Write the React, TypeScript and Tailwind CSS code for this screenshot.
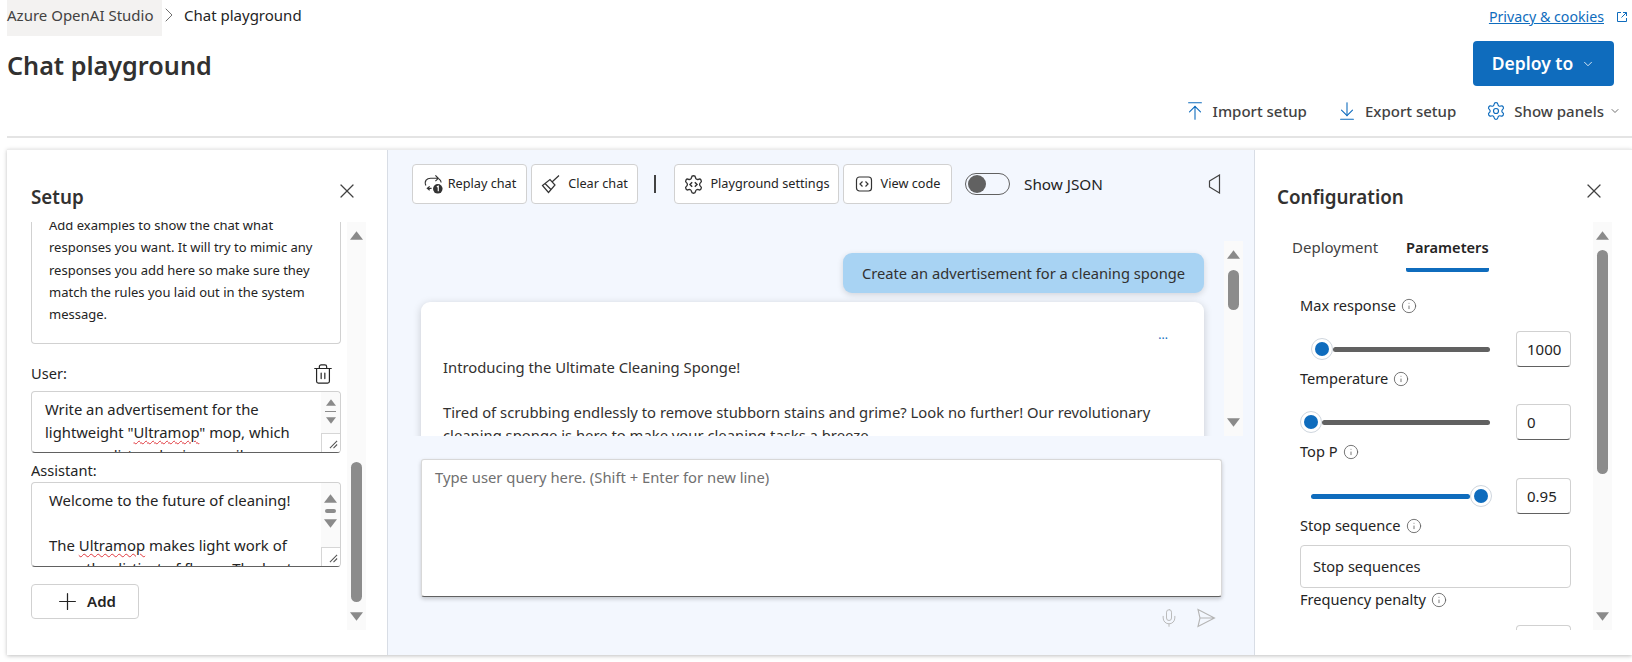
import {
  ChevronDown,
  ChevronRight,
  Info,
  Plus,
  Settings,
  Trash2,
  X,
  ArrowUpToLine,
  ArrowDownToLine,
  Mic,
} from "lucide-react";

function Up({ className }: { className: string }) {
  return (
    <svg viewBox="0 0 12 8" className={className}>
      <path d="M6 0 L12 8 H0 Z" fill="#8a8a8a" />
    </svg>
  );
}

function Down({ className }: { className: string }) {
  return (
    <svg viewBox="0 0 12 8" className={className}>
      <path d="M6 8 L12 0 H0 Z" fill="#8a8a8a" />
    </svg>
  );
}

function ScrollBar({ top, height }: { top: number; height: number }) {
  return (
    <div className="relative w-[19px] h-full bg-[#fafafa] shrink-0">
      <Up className="absolute left-[3px] top-[9px] w-[13px] h-[9px]" />
      <div
        className="absolute left-[4px] w-[11px] rounded-full bg-[#8c8c8c]"
        style={{ top, height }}
      />
      <Down className="absolute left-[3px] bottom-[9px] w-[13px] h-[9px]" />
    </div>
  );
}

function MiniBar({ tall }: { tall?: boolean }) {
  return (
    <div className="w-[19px] shrink-0 flex flex-col bg-[#fafafa] rounded-tr-[4px]">
      <div className={`flex-1 flex flex-col items-center ${tall ? "pt-[11px] gap-[6px]" : "pt-[7px] gap-[5px]"}`}>
        <Up className={tall ? "w-[13px] h-[9px]" : "w-[10px] h-[7px]"} />
        <div className={tall ? "w-[11px] h-[4px] rounded-full bg-[#8c8c8c]" : "w-[11px] h-px bg-[#8c8c8c]"} />
        <Down className={tall ? "w-[13px] h-[9px]" : "w-[10px] h-[7px]"} />
      </div>
      <div className="h-[19px] bg-white border-l border-t border-[#d6d6d6] flex items-end justify-end pr-[2px] pb-[3px]">
        <svg viewBox="0 0 10 10" className="w-[9px] h-[9px]" stroke="#555" strokeWidth="1.2">
          <path d="M1 9 L9 1 M5 9 L9 5" />
        </svg>
      </div>
    </div>
  );
}

function ToolButton({ width, icon, label, gap }: { width: number; icon: React.ReactNode; label: string; gap: string }) {
  return (
    <button
      className={`h-[40px] shrink-0 bg-white border border-[#d1d1d1] rounded-[4px] flex items-center justify-center text-[12.7px] text-[#242424] ${gap}`}
      style={{ width }}
    >
      {icon}
      <span>{label}</span>
    </button>
  );
}

function FieldLabel({ text, className }: { text: string; className: string }) {
  return (
    <div className={`h-[20px] flex items-center gap-[5px] text-[14.6px] text-[#242424] ${className}`}>
      <span>{text}</span>
      <Info className="w-[16px] h-[16px] text-[#616161]" strokeWidth={1.3} />
    </div>
  );
}

function Thumb() {
  return (
    <div className="w-[22px] h-[22px] shrink-0 rounded-full bg-white border border-[#cfd6de] flex items-center justify-center">
      <div className="w-[14px] h-[14px] rounded-full bg-[#0f6cbd]" />
    </div>
  );
}

function ValueBox({ value }: { value: string }) {
  return (
    <div className="w-[55px] h-[36px] ml-auto shrink-0 bg-white border border-[#d1d1d1] border-b-[#616161] rounded-[4px] flex items-center text-[15px] text-[#242424] pl-[10px]">
      {value}
    </div>
  );
}

function Squiggle({ children }: { children: React.ReactNode }) {
  return <span className="underline decoration-wavy decoration-[#e0383e] decoration-1 underline-offset-2">{children}</span>;
}

export default function App() {
  return (
    <div className="w-[1632px] h-[662px] overflow-hidden bg-white text-[#242424] font-['Noto_Sans','Open_Sans',sans-serif]">
      {/* top header */}
      <div className="h-[36px] flex items-start pl-[7px]">
        <div className="h-[36px] w-[155px] bg-[#f3f2f1] text-[15px] leading-[31px] text-[#424242]">Azure OpenAI Studio</div>
        <ChevronRight className="w-[24px] h-[24px] mt-[3px] -ml-[5px] text-[#707070]" strokeWidth={1} />
        <div className="ml-[3px] text-[15px] leading-[31px] text-[#242424]">Chat playground</div>
        <div className="ml-auto flex items-center mr-[4px] h-[33px]">
          <span className="text-[14.2px] text-[#0f6cbd] underline">Privacy &amp; cookies</span>
          <svg viewBox="0 0 12 12" fill="none" stroke="#0f6cbd" strokeWidth="1" className="w-[12px] h-[12px] ml-[12px]">
            <path d="M5 1.5 H1.5 V10.5 H10.5 V7 M7 1.5 H10.5 V5 M10.5 1.5 L5.5 6.5" />
          </svg>
        </div>
      </div>
      <div className="h-[55px] pl-[7px] pr-[18px] flex items-start pt-[5px]">
        <h1 className="text-[25.2px] leading-[48px] font-semibold text-[#323130]">Chat playground</h1>
        <button className="ml-auto h-[45px] w-[141px] bg-[#0f6cbd] rounded-[4px] text-white text-[17.5px] font-semibold flex items-center justify-center gap-[8px]">
          Deploy to
          <ChevronDown className="w-[14px] h-[14px]" strokeWidth={1.4} />
        </button>
      </div>
      <div className="h-[40px] flex items-center justify-end pr-[11px] text-[15px] font-medium text-[#424242]">
        <ArrowUpToLine className="w-[22px] h-[22px] text-[#0f6cbd]" strokeWidth={1.2} />
        <span className="ml-[7px]">Import setup</span>
        <ArrowDownToLine className="w-[22px] h-[22px] ml-[29px] text-[#0f6cbd]" strokeWidth={1.2} />
        <span className="ml-[7px]">Export setup</span>
        <Settings className="w-[20px] h-[20px] ml-[30px] text-[#0f6cbd]" strokeWidth={1.4} />
        <span className="ml-[8px]">Show panels</span>
        <ChevronDown className="w-[12px] h-[12px] ml-[5px] text-[#707070]" />
      </div>
      <div className="h-[2px] mt-[5px] ml-[7px] bg-[#e4e4e4]" />

      {/* main card */}
      <div className="mt-[11px] ml-[7px] h-[506px] flex border-t border-[#ececec] shadow-[0_1px_4px_rgba(0,0,0,0.25)]">
        {/* setup */}
        <div className="w-[381px] shrink-0 border-r border-[#d8dde5] bg-white flex flex-col">
          <div className="h-[72px] pl-[24px] pr-[28px] pt-[30px] flex items-start justify-between">
            <div className="text-[18.8px] leading-[34px] font-semibold text-[#323130]">Setup</div>
            <X className="w-[24px] h-[24px] -mt-[1px] text-[#424242]" strokeWidth={1.2} />
          </div>
          <div className="h-[408px] flex pl-[24px]">
            <div className="w-[310px] overflow-hidden flex flex-col">
              <div className="h-[122px] shrink-0 border-x border-b border-[#d1d1d1] rounded-b-[4px] overflow-hidden pl-[17px] pr-[26px] text-[13px] leading-[22.3px]">
                <div className="-mt-[8px]">
                  Add examples to show the chat what responses you want. It will try to mimic any responses you add here so make sure they match the rules you laid out in the system message.
                </div>
              </div>
              <div className="h-[47px] shrink-0 pt-[19px] flex items-start justify-between pr-[7px]">
                <span className="text-[14.6px] leading-[20px]">User:</span>
                <Trash2 className="w-[22px] h-[22px]" strokeWidth={1.3} />
              </div>
              <div className="h-[62px] shrink-0 flex bg-white border border-[#d1d1d1] border-b-[#616161] rounded-[4px] overflow-hidden">
                <div className="flex-1 pl-[13px] pt-[6px] text-[14.8px] leading-[23px]">
                  Write an advertisement for the lightweight "<Squiggle>Ultramop</Squiggle>" mop, which removes dirt and grime easily
                </div>
                <MiniBar />
              </div>
              <div className="h-[29px] shrink-0 pt-[7px] text-[14.6px] leading-[20px]">Assistant:</div>
              <div className="h-[85px] shrink-0 flex bg-white border border-[#d1d1d1] border-b-[#616161] rounded-[4px] overflow-hidden">
                <div className="flex-1 pl-[17px] pt-[6px] text-[14.9px] leading-[22.5px]">
                  Welcome to the future of cleaning!
                  <br />
                  <br />
                  The <Squiggle>Ultramop</Squiggle> makes light work of even the dirtiest of floors. The best
                </div>
                <MiniBar tall />
              </div>
              <button className="mt-[17px] w-[108px] h-[35px] shrink-0 bg-white border border-[#d1d1d1] rounded-[4px] flex items-center justify-center gap-[6px] text-[15px] font-semibold">
                <Plus className="w-[27px] h-[27px]" strokeWidth={1.1} />
                Add
              </button>
            </div>
            <div className="ml-[6px] h-full">
              <ScrollBar top={240} height={140} />
            </div>
          </div>
        </div>

        {/* chat */}
        <div className="w-[867px] shrink-0 bg-[#f3f7fe] border-r border-[#d8dde5] flex flex-col">
          <div className="h-[54px] pt-[14px] pl-[24px] flex items-start">
            <ToolButton
              width={115}
              gap="gap-[4px]"
              label="Replay chat"
              icon={
                <svg viewBox="0 0 22 22" fill="none" stroke="#333" strokeWidth="1.2" className="w-[21px] h-[21px]">
                  <path d="M3 12 C1 7 4 4.5 8 4.5 H16 M13 1.5 L16 4.5 L13 7.5 M16.5 5 C18 6 19 7.5 19 9" />
                  <path d="M5 15 H9 M7 13 L4.5 15 L7 17" />
                  <circle cx="15.5" cy="15.5" r="5" fill="#333" stroke="none" />
                  <path d="M14.5 13.5 L16 12.8 V18" stroke="#fff" />
                </svg>
              }
            />
            <div className="ml-[4px]">
              <ToolButton
                width={107}
                gap="gap-[7px]"
                label="Clear chat"
                icon={
                  <svg viewBox="0 0 20 20" fill="none" stroke="#333" strokeWidth="1.2" className="w-[20px] h-[20px]">
                    <path d="M11 8 L18 1.5 M1.5 11.5 L9 5.5 L14 11 L7.5 18.5 Z M4 9.5 L10 15.5" />
                  </svg>
                }
              />
            </div>
            <div className="w-[2px] h-[18px] mt-[11px] ml-[16px] bg-[#424242]" />
            <div className="ml-[18px]">
              <ToolButton
                width={165}
                gap="gap-[6px]"
                label="Playground settings"
                icon={
                  <svg viewBox="0 0 24 24" fill="none" stroke="#333" strokeWidth="1.5" className="w-[21px] h-[21px]">
                    <path d="M9.671 4.136a2.34 2.34 0 0 1 4.659 0 2.34 2.34 0 0 0 3.319 1.915 2.34 2.34 0 0 1 2.33 4.033 2.34 2.34 0 0 0 0 3.831 2.34 2.34 0 0 1-2.33 4.033 2.34 2.34 0 0 0-3.319 1.915 2.34 2.34 0 0 1-4.659 0 2.34 2.34 0 0 0-3.32-1.915 2.34 2.34 0 0 1-2.33-4.033 2.34 2.34 0 0 0 0-3.831A2.34 2.34 0 0 1 6.35 6.051a2.34 2.34 0 0 0 3.32-1.915" />
                    <path d="M10.5 9.5 L8 12 L10.5 14.5 M13.5 9.5 L16 12 L13.5 14.5" strokeWidth="1.7" />
                  </svg>
                }
              />
            </div>
            <div className="ml-[4px]">
              <ToolButton
                width={109}
                gap="gap-[8px]"
                label="View code"
                icon={
                  <svg viewBox="0 0 18 18" fill="none" stroke="#333" strokeWidth="1.2" className="w-[18px] h-[18px]">
                    <rect x="1.5" y="2" width="15" height="14" rx="3" />
                    <path d="M7.5 6.5 L5 9 L7.5 11.5 M10.5 6.5 L13 9 L10.5 11.5" />
                  </svg>
                }
              />
            </div>
            <div className="ml-[13px] mt-[9px] w-[45px] h-[22px] rounded-full border border-[#616161] flex items-center pl-[2px]">
              <div className="w-[18px] h-[18px] rounded-full bg-[#616161]" />
            </div>
            <div className="ml-[14px] mt-[9px] text-[15.3px] leading-[22px]">Show JSON</div>
            <svg viewBox="0 0 14 20" fill="none" stroke="#424242" strokeWidth="1.2" className="w-[14px] h-[20px] ml-[105px] mt-[10px]">
              <path d="M1.5 7 L11.5 1 V19 L1.5 13 Z" />
            </svg>
          </div>

          <div className="h-[195px] mt-[37px] flex shrink-0">
            <div className="ml-[17px] w-[815px] px-[16px] overflow-hidden flex flex-col items-end">
              <div className="mt-[12px] h-[40px] w-[361px] shrink-0 rounded-[9px] bg-[#a8d3f3] shadow-[0_2px_6px_rgba(0,0,0,0.14)] flex items-center justify-center text-[14.7px] text-[#323130]">
                Create an advertisement for a cleaning sponge
              </div>
              <div className="mt-[9px] w-[783px] h-[200px] shrink-0 rounded-[9px] bg-white shadow-[0_2px_8px_rgba(0,0,0,0.18)] pl-[22px] pr-[30px] text-[14.8px] leading-[22.5px] text-[#323130]">
                <div className="h-[54px] pr-[6px] flex justify-end text-[#0f6cbd] leading-[14px] pt-[26px]">
                  <span className="text-[12px]">...</span>
                </div>
                Introducing the Ultimate Cleaning Sponge!
                <br />
                <br />
                Tired of scrubbing endlessly to remove stubborn stains and grime? Look no further! Our revolutionary cleaning sponge is here to make your cleaning tasks a breeze.
              </div>
            </div>
            <div className="ml-[4px] h-full">
              <ScrollBar top={29} height={40} />
            </div>
          </div>

          <div className="mt-[23px] ml-[33px] w-[801px] h-[138px] bg-white border border-[#d8d8d8] border-b-[#616161] rounded-[3px] shadow-[0_2px_4px_rgba(0,0,0,0.2)] pl-[13px] pt-[7px] text-[14.8px] leading-[20px] text-[#707070]">
            Type user query here. (Shift + Enter for new line)
          </div>
          <div className="mt-[10px] pr-[38px] flex justify-end items-center gap-[17px] text-[#b5b5b5]">
            <Mic className="w-[20px] h-[22px]" strokeWidth={1.1} />
            <svg viewBox="0 0 20 20" fill="none" stroke="#b5b5b5" strokeWidth="1.1" className="w-[20px] h-[20px]">
              <path d="M2 1.5 L18.5 10 L2 18.5 L4 10 Z M4 10 H18.5" />
            </svg>
          </div>
        </div>

        {/* configuration */}
        <div className="flex-1 bg-white flex flex-col">
          <div className="h-[72px] pl-[22px] pr-[26px] pt-[30px] flex items-start justify-between">
            <div className="text-[18.8px] leading-[34px] font-semibold text-[#323130]">Configuration</div>
            <X className="w-[24px] h-[24px] -mt-[1px] text-[#424242]" strokeWidth={1.2} />
          </div>
          <div className="h-[408px] flex">
            <div className="w-[338px] shrink-0 overflow-hidden">
              <div className="h-[52px] pl-[37px] flex items-start">
                <div className="w-[114px] pt-[15px] leading-[20px] text-[15px] text-[#424242]">Deployment</div>
                <div className="pt-[15px] leading-[20px] text-[14.6px] font-semibold h-[50px] border-b-[4px] border-[#0f6cbd] rounded-b-[2px]">Parameters</div>
              </div>
              <div className="pl-[45px] pr-[22px]">
                <FieldLabel text="Max response" className="mt-[22px]" />
                <div className="mt-[15px] h-[36px] flex items-center pl-[11px]">
                  <Thumb />
                  <div className="w-[157px] h-[5px] rounded-full bg-[#616161]" />
                  <ValueBox value="1000" />
                </div>
                <FieldLabel text="Temperature" className="mt-[2px]" />
                <div className="mt-[15px] h-[36px] flex items-center">
                  <Thumb />
                  <div className="w-[168px] h-[5px] rounded-full bg-[#616161]" />
                  <ValueBox value="0" />
                </div>
                <FieldLabel text="Top P" className="mt-[2px]" />
                <div className="mt-[16px] h-[36px] flex items-center pl-[11px]">
                  <div className="w-[159px] h-[5px] rounded-full bg-[#0f6cbd]" />
                  <Thumb />
                  <ValueBox value="0.95" />
                </div>
                <FieldLabel text="Stop sequence" className="mt-[2px]" />
                <div className="mt-[9px] h-[43px] bg-white border border-[#d1d1d1] rounded-[4px] flex items-center pl-[12px] text-[14.6px]">
                  Stop sequences
                </div>
                <FieldLabel text="Frequency penalty" className="mt-[2px]" />
                <div className="mt-[15px] h-[36px] flex">
                  <ValueBox value="" />
                </div>
              </div>
            </div>
            <ScrollBar top={28} height={224} />
          </div>
        </div>
      </div>
    </div>
  );
}
